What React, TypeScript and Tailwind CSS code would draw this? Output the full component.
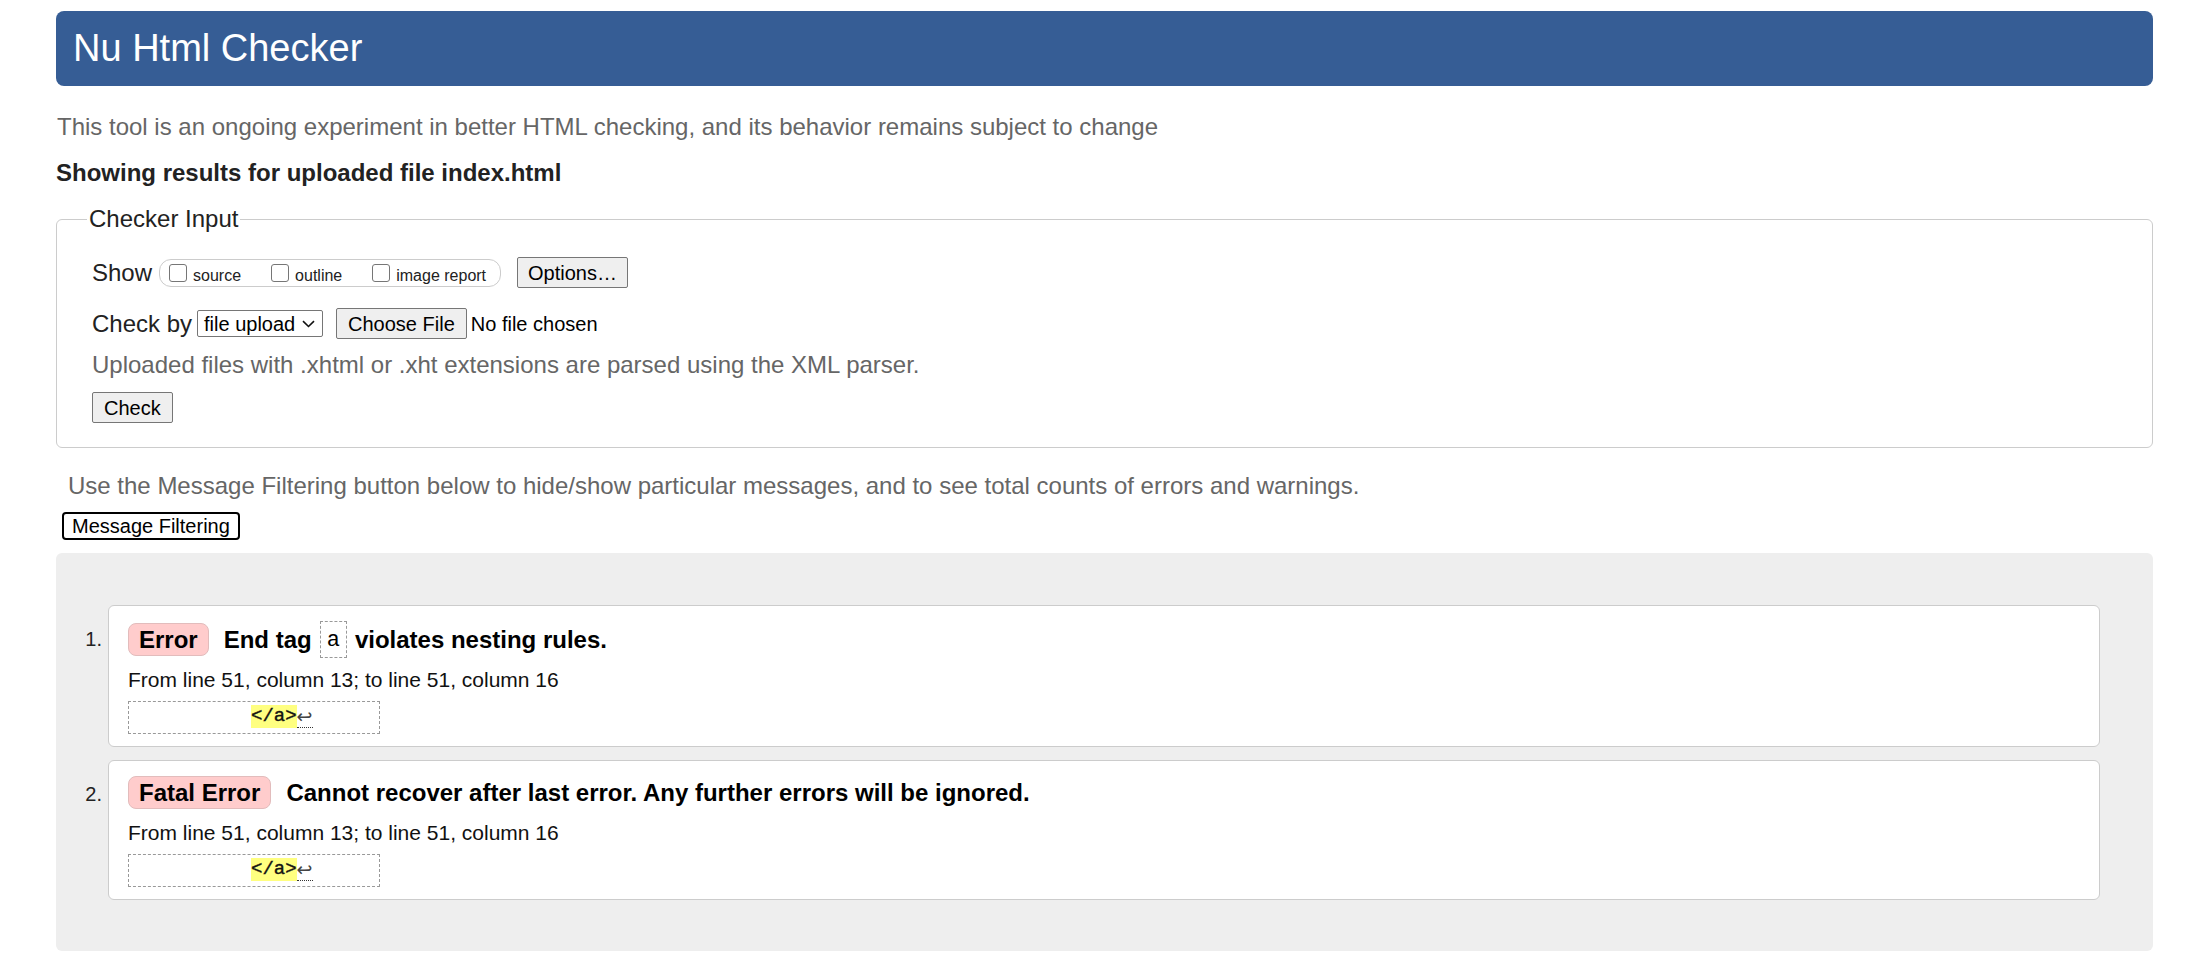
import React from "react";

type Msg = {
  num: string;
  type: string;
  parts: { text: string; code?: boolean }[];
  fromGap: string;
};

const messages: Msg[] = [
  {
    num: "1.",
    type: "Error",
    parts: [{ text: "End tag" }, { text: "a", code: true }, { text: "violates nesting rules." }],
    fromGap: "mt-[10px]",
  },
  {
    num: "2.",
    type: "Fatal Error",
    parts: [{ text: "Cannot recover after last error. Any further errors will be ignored." }],
    fromGap: "mt-[12px]",
  },
];

function Checkbox({ label, first }: { label: string; first?: boolean }) {
  return (
    <label className={`flex items-center ${first ? "" : "ml-[30px]"}`}>
      <span className="w-[18px] h-[18px] rounded-[3px] border border-[#767676] bg-white" />
      <span className="ml-[6px] pt-[6px] text-[16px] leading-[18px] text-[#222]">{label}</span>
    </label>
  );
}

function MessageItem({ m }: { m: Msg }) {
  return (
    <li className="flex">
      <div className="w-[52px] shrink-0 pr-[6px] pt-[23px] text-right text-[20px] leading-[23px] text-[#222]">
        {m.num}
      </div>
      <div className="flex-1 rounded-[6px] border border-[#ccc] bg-white pl-[19px] pt-[15px] pb-[12px]">
        <div className="flex items-center">
          <span className="h-[33px] flex items-center rounded-[8px] border border-[#e2bcbc] bg-[#fcc] px-[10px] text-[24px] font-bold leading-[28px] text-black">
            {m.type}
          </span>
          <div className="ml-[15px] flex items-center text-[24px] font-bold leading-[28px] text-black">
            {m.parts.map((p, i) =>
              p.code ? (
                <code
                  key={i}
                  className="mx-[8px] flex h-[37px] items-center border border-dashed border-[#999] px-[6px] pt-[3px] font-['Liberation_Mono',monospace] text-[22px] font-normal text-black"
                >
                  {p.text}
                </code>
              ) : (
                <span key={i}>{p.text}</span>
              ),
            )}
          </div>
        </div>
        <p className={`${m.fromGap} text-[21px] leading-[24px] text-[#111]`}>
          From line 51, column 13; to line 51, column 16
        </p>
        <div className="mt-[9px] h-[33px] w-[252px] border border-dashed border-[#999] pl-[122px] pt-[3px]">
          <div className="flex h-[23px] items-stretch font-['Liberation_Mono','DejaVu_Sans_Mono',monospace] text-[19px] leading-[23px]">
            <span className="bg-[#ffff80] text-[#111] [-webkit-text-stroke:0.4px_#111]">&lt;/a&gt;</span>
            <span className="border-b border-dotted border-[#333] font-['DejaVu_Sans',sans-serif] text-[19px] leading-[22px] text-[#444]">
              ↩
            </span>
          </div>
        </div>
      </div>
    </li>
  );
}

export default function App() {
  return (
    <div className="min-h-screen bg-white pl-[56px] pr-[32px] pt-[11px] pb-[14px] font-['Liberation_Sans',Arial,sans-serif]">
      <h1 className="flex h-[75px] items-center rounded-[8px] bg-[#365d95] pl-[17px] text-[38px] font-normal text-white">
        Nu Html Checker
      </h1>

      <p className="mt-[27px] pl-[1px] text-[24px] leading-[28px] text-[#666]">
        This tool is an ongoing experiment in better HTML checking, and its behavior remains subject to change
      </p>
      <h2 className="mt-[18px] text-[24px] font-bold leading-[28px] text-[#222]">
        Showing results for uploaded file index.html
      </h2>

      <fieldset className="mt-[18px] rounded-[6px] border border-[#ccc]">
        <legend className="ml-[30px] px-[2px] text-[24px] leading-[28px] text-[#222]">Checker Input</legend>
        <div className="pl-[35px] pt-[24px] pb-[24px]">
          <div className="flex h-[31px] items-center">
            <span className="text-[24px] leading-[28px] text-[#222]">Show</span>
            <div className="ml-[7px] flex h-[28px] w-[342px] items-center rounded-[12px] border border-[#ccc] pl-[9px]">
              <Checkbox label="source" first />
              <Checkbox label="outline" />
              <Checkbox label="image report" />
            </div>
            <button className="ml-[16px] h-[31px] rounded-[2px] border border-[#767676] bg-[#efefef] px-[10px] text-[20px] text-black">
              Options…
            </button>
          </div>

          <div className="mt-[20px] flex h-[31px] items-center">
            <span className="text-[24px] leading-[28px] text-[#222]">Check by</span>
            <div className="ml-[5px] flex h-[27px] w-[126px] items-center justify-between rounded-[2px] border border-[#767676] bg-white pl-[6px] pr-[7px] text-[20px] text-black">
              <span>file upload</span>
              <svg width="13" height="8" viewBox="0 0 13 8" fill="none">
                <path d="M1 1.2 6.5 6.5 12 1.2" stroke="#111" strokeWidth="1.6" />
              </svg>
            </div>
            <button className="ml-[13px] h-[31px] rounded-[2px] border border-[#767676] bg-[#efefef] px-[11px] text-[20px] text-black">
              Choose File
            </button>
            <span className="ml-[4px] text-[20px] text-black">No file chosen</span>
          </div>

          <p className="mt-[12px] text-[24px] leading-[28px] text-[#666]">
            Uploaded files with .xhtml or .xht extensions are parsed using the XML parser.
          </p>

          <button className="mt-[13px] h-[31px] rounded-[2px] border border-[#767676] bg-[#efefef] px-[11px] text-[20px] text-black">
            Check
          </button>
        </div>
      </fieldset>

      <p className="mt-[24px] pl-[12px] text-[24px] leading-[28px] text-[#666]">
        Use the Message Filtering button below to hide/show particular messages, and to see total counts of errors and
        warnings.
      </p>
      <button className="ml-[6px] mt-[12px] h-[28px] rounded-[4px] border-2 border-black bg-white px-[8px] text-[20px] leading-[22px] text-black">
        Message Filtering
      </button>

      <div className="mt-[13px] rounded-[6px] bg-[#eee] pt-[52px] pb-[51px] pr-[53px]">
        <ol className="flex flex-col gap-[13px]">
          {messages.map((m) => (
            <MessageItem key={m.num} m={m} />
          ))}
        </ol>
      </div>
    </div>
  );
}
